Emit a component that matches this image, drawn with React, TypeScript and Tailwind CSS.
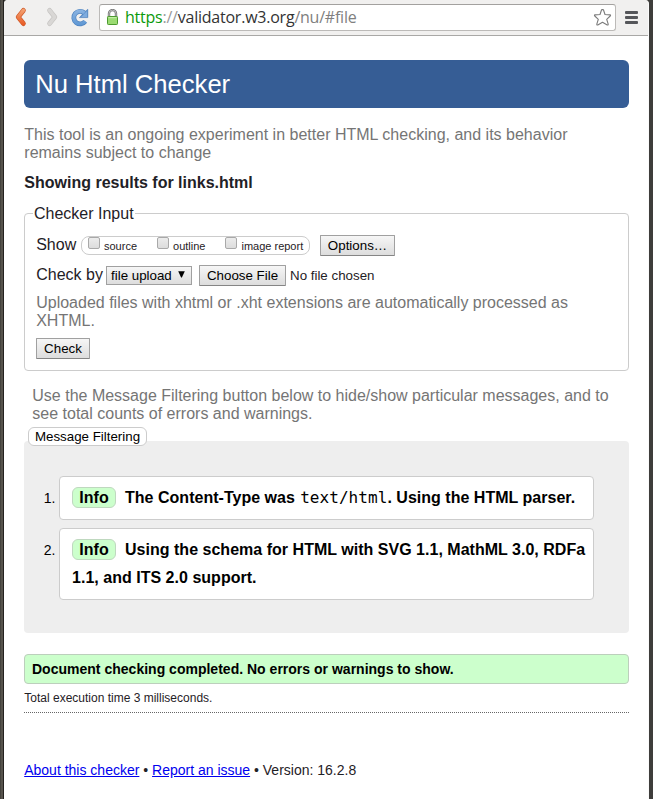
import type { ReactNode } from "react";

function Toolbar() {
  return (
    <header className="flex h-9 items-start rounded-t-[4px] border-b border-[#a9a8a6] bg-[#f1f0ef]">
      <svg width="95" height="35" viewBox="4 0 95 35" className="shrink-0">
        <defs>
          <linearGradient id="back" gradientUnits="userSpaceOnUse" x1="0" y1="8" x2="0" y2="26">
            <stop offset="0" stopColor="#f4a878" />
            <stop offset="1" stopColor="#e8561f" />
          </linearGradient>
          <linearGradient id="reload" gradientUnits="userSpaceOnUse" x1="0" y1="9" x2="0" y2="27">
            <stop offset="0" stopColor="#8db5e2" />
            <stop offset="1" stopColor="#5a94d2" />
          </linearGradient>
        </defs>
        <g fill="none" strokeLinecap="round" strokeLinejoin="round">
          <path d="M23.4 10.4 L18.2 17 L23.4 23.6" stroke="#cf5a2a" strokeWidth="4.8" />
          <path d="M23.4 10.4 L18.2 17 L23.4 23.6" stroke="url(#back)" strokeWidth="3.4" />
          <path d="M49.6 10.4 L54.8 17 L49.6 23.6" stroke="#c6c4c2" strokeWidth="4.8" />
          <path d="M49.6 10.4 L54.8 17 L49.6 23.6" stroke="#d9d7d5" strokeWidth="3.4" />
        </g>
        <path d="M84.3 12.9 A6.3 6.3 0 1 0 85.2 21.3" fill="none" stroke="#4d82bf" strokeWidth="4.8" />
        <path d="M87.8 9.2 V17.6 H79.4 L82.2 14.6 L84.9 11.9 Z" fill="#4d82bf" stroke="#4d82bf" strokeWidth="0.6" strokeLinejoin="round" />
        <path d="M84.3 12.9 A6.3 6.3 0 1 0 85.2 21.3" fill="none" stroke="url(#reload)" strokeWidth="3.4" />
        <path d="M87.1 10.8 V16.9 H81 Z" fill="#7eabde" />
      </svg>
      <div className="mt-1 flex h-[27px] w-[517px] items-center rounded-[3px] border border-[#bcbab8] border-t-[#a3a19f] bg-white pl-1.5 pr-[3px]">
        <svg width="13" height="17" viewBox="0 0 13 17" className="shrink-0">
          <path d="M3 8 V4.6 A3.5 3.5 0 0 1 10 4.6 V8" fill="none" stroke="#777" strokeWidth="2.4" />
          <path d="M3 8 V4.6 A3.5 3.5 0 0 1 10 4.6 V8" fill="none" stroke="#ccc" strokeWidth="0.8" />
          <rect x="1.5" y="7.5" width="10" height="8" rx="0.8" fill="#9bdb72" stroke="#4c9a2f" />
          <path d="M2.5 8.7 H10.5" stroke="#c9f0b0" />
        </svg>
        <span className="-mt-px ml-[6px] whitespace-nowrap font-['Open_Sans','Noto_Sans',sans-serif] text-[16px] leading-[20px] tracking-[-0.23px] text-[#333]">
          <span className="text-[#0b9a0b]">https</span>
          <span className="text-[#999]">://</span>validator.w3.org<span className="text-[#808080]">/nu/#file</span>
        </span>
        <svg width="19" height="19" viewBox="0 0 19 19" className="ml-auto shrink-0">
          <path d="M9.5 1.6 Q10 1.2 10.5 2 L12 6.5 L17 6.9 Q18 7.2 17.2 8 L13.7 11.3 L15.2 16.2 Q15.2 17.3 14.2 16.9 L9.5 14.2 L4.8 16.9 Q3.8 17.3 3.8 16.2 L5.3 11.3 L1.8 8 Q1 7.2 2 6.9 L7 6.5 L8.5 2 Q9 1.2 9.5 1.6 Z" fill="#fff" stroke="#7b7b7b" strokeWidth="1.1" strokeLinejoin="round" />
        </svg>
      </div>
      <div className="ml-[9px] mt-[11px] flex w-[13px] flex-col gap-[2px]">
        <i className="h-[3px] rounded-[1px] bg-[#55565a]" />
        <i className="h-[3px] rounded-[1px] bg-[#55565a]" />
        <i className="h-[3px] rounded-[1px] bg-[#55565a]" />
      </div>
    </header>
  );
}

function Button({ children, className = "" }: { children: ReactNode; className?: string }) {
  return (
    <button
      className={
        "flex h-[21px] items-center justify-center whitespace-nowrap rounded-[1px] border border-[#a0a0a0] border-b-[#858585] bg-linear-to-b from-[#f6f6f6] to-[#dddddd] text-[13.333px] leading-[15px] text-black " +
        className
      }
    >
      {children}
    </button>
  );
}

function Check({ label, className = "" }: { label: string; className?: string }) {
  return (
    <label className={"flex text-[11px] leading-[13px] " + className}>
      <span className="h-3 w-3 shrink-0 rounded-[2px] border border-[#a9a9a9] bg-linear-to-b from-[#ececec] to-[#dcdcdc]" />
      <span className="ml-1 mt-[3px] whitespace-nowrap">{label}</span>
    </label>
  );
}

function Message({ n, children }: { n: number; children: ReactNode }) {
  return (
    <li className="flex">
      <span className="mt-[13px] w-[35px] shrink-0 pr-[3.5px] text-right text-[14px] leading-[18px] text-black">{n}.</span>
      <p className="w-[535px] rounded-[4px] border border-[#ccc] bg-white py-[7px] pl-3 pr-1 font-bold leading-[28px] tracking-[0.02px] text-black">
        <span className="mr-[9px] inline-block h-[21px] w-11 rounded-[6px] border border-[#bfd8bf] bg-[#cfc] text-center align-baseline leading-[19px]">Info</span>
        {children}
      </p>
    </li>
  );
}

export default function App() {
  return (
    <div className="flex h-[799px] w-[653px] overflow-hidden bg-[#3c3b37] font-['Liberation_Sans',Arial,sans-serif] text-[16px] leading-[18px] text-[#1f2126]">
      <div className="w-[4px] shrink-0 border-l border-r border-l-[#45433e] border-r-[#24221f] bg-[#56534c]" />
      <div className="w-[645px] shrink-0 rounded-t-[4px] border-r border-[#fafafa] bg-white">
        <Toolbar />
        <main className="ml-5 w-[605px] pt-6">
          <h1 className="h-12 rounded-[6px] bg-[#365d95] pl-[11.3px] text-[25.6px] leading-[48px] text-white">Nu Html Checker</h1>
          <p className="mt-[18px] whitespace-nowrap pl-[0.3px] tracking-[0.005px] text-[#757575]">
            This tool is an ongoing experiment in better HTML checking, and its behavior
            <br />
            remains subject to change
          </p>
          <h2 className="mt-3 pl-[0.3px] font-bold">Showing results for links.html</h2>
          <fieldset className="mt-[12px] h-[167px] rounded-[4px] border border-[#ccc] px-[11px]">
            <legend className="-ml-[3px] h-[18px] px-px leading-[20px]">Checker Input</legend>
            <div className="mt-[13px] flex">
              <span className="mt-px w-[45px] pl-[0.2px]">Show</span>
              <div className="mt-px flex h-[19px] w-[229px] rounded-[8px] border border-[#ccc] pl-[6px]">
                <Check label="source" />
                <Check label="outline" className="ml-5" />
                <Check label="image report" className="ml-5" />
              </div>
              <Button className="ml-[10px] w-[75px]">Options…</Button>
            </div>
            <div className="mt-[9px] flex items-start">
              <span className="mt-px w-[70px] pl-[0.2px]">Check by</span>
              <div className="mt-px flex h-[19px] w-[86px] items-center justify-between border border-[#a0a0a0] bg-linear-to-b from-[#f6f6f6] to-[#dddddd] pl-1 pr-[6px] text-[13.333px] leading-[15px] text-black">
                file upload
                <svg width="7" height="7" viewBox="0 0 7 7" className="-mt-[2px]">
                  <path d="M0.2 0.2 H6.8 L3.9 6.6 H3.1 Z" fill="#000" />
                </svg>
              </div>
              <Button className="ml-[7px] w-[87px]">Choose File</Button>
              <span className="ml-1 mt-[2px] text-[13.333px]">No file chosen</span>
            </div>
            <p className="mt-[8px] whitespace-nowrap pl-[0.2px] text-[#757575]">
              Uploaded files with xhtml or .xht extensions are automatically processed as
              <br />
              XHTML.
            </p>
            <Button className="mt-2 w-[54px]">Check</Button>
          </fieldset>
          <p className="mt-4 whitespace-nowrap pl-[8.3px] text-[#757575]">
            Use the Message Filtering button below to hide/show particular messages, and to
            <br />
            see total counts of errors and warnings.
          </p>
          <button className="relative ml-1 mt-1 flex h-[19px] w-[119px] items-center justify-center rounded-[6px] border border-[#ccc] bg-white text-[13.333px] leading-[15px] text-black">
            Message Filtering
          </button>
          <ol className="-mt-[5px] flex h-[192px] flex-col gap-2 rounded-[4px] bg-[#eee] pt-[35px]">
            <Message n={1}>
              The Content-Type was <code className="ml-[0.8px] font-['DejaVu_Sans_Mono',monospace] text-[16px] font-normal leading-[20px] tracking-[0.06px]">text/html</code>. Using the HTML parser.
            </Message>
            <Message n={2}>Using the schema for HTML with SVG 1.1, MathML 3.0, RDFa 1.1, and ITS 2.0 support.</Message>
          </ol>
          <p className="mt-[21px] h-[30px] rounded-[4px] border border-[#bccfbc] bg-[#cfc] pl-[7px] text-[14px] font-bold leading-[28px] tracking-[0.01px] text-black">
            Document checking completed. No errors or warnings to show.
          </p>
          <p className="mt-[6px] pl-[0.3px] text-[12px] leading-[16px]">Total execution time 3 milliseconds.</p>
          <hr className="mt-[6px] border-t border-dotted border-[#666]" />
          <footer className="mt-[49px] pl-[0.2px] text-[14px] leading-[16px]">
            <a className="text-[#0000ee] underline">About this checker</a> • <a className="text-[#0000ee] underline">Report an issue</a> • Version: 16.2.8
          </footer>
        </main>
      </div>
      <div className="w-[4px] bg-[#3e3d3b]" />
    </div>
  );
}
